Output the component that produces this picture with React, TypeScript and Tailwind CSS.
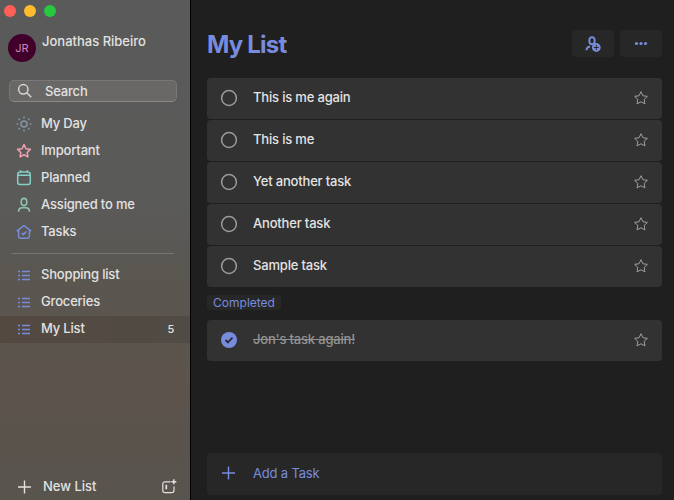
import React from 'react';

type IconProps = { className?: string };

const starPath =
  'M8 1.7l1.95 4.05 4.45.6-3.25 3.1.8 4.45L8 11.75 4.05 13.9l.8-4.45L1.6 6.35l4.45-.6z';

function Star({ className = '' }: IconProps) {
  return (
    <svg viewBox="0 0 16 16" className={`h-4 w-4 ${className}`} fill="none" stroke="currentColor" strokeLinejoin="round">
      <path d={starPath} />
    </svg>
  );
}

function Sun() {
  return (
    <svg viewBox="0 0 16 16" className="h-4 w-4 text-[#8293a5]" fill="none" stroke="currentColor" strokeWidth="1.5">
      <circle cx="8" cy="8" r="3" />
      <path
        strokeWidth="1.7"
        d="M8 .5v1.700M8 13.800v1.700M.5 8h1.700M13.800 8h1.700M2.700 2.700l1.100 1.100M12.200 12.200l1.100 1.100M2.700 13.300l1.100-1.100M12.200 3.800l1.100-1.100"
      />
    </svg>
  );
}

function Calendar() {
  return (
    <svg viewBox="0 0 16 16" className="h-4 w-4 text-[#84cfc7]" fill="none" stroke="currentColor" strokeWidth="1.5">
      <rect x="1.7" y="2" width="12.6" height="12.6" rx="2.6" />
      <path d="M1.7 5.3h12.6M4.7.3v2M11.3.3v2" />
    </svg>
  );
}

function Person() {
  return (
    <svg viewBox="0 0 16 16" className="h-4 w-4 text-[#8fc5aa]" fill="none" stroke="currentColor" strokeWidth="1.6">
      <ellipse cx="8" cy="5" rx="2.8" ry="3.6" />
      <path d="M2.6 14.8v-.8a3.6 3.6 0 0 1 3.6-3.300h3.6a3.6 3.6 0 0 1 3.6 3.300v.8" />
    </svg>
  );
}

function Home() {
  return (
    <svg viewBox="0 0 16 16" className="h-4 w-4 text-[#788cde]" fill="none" stroke="currentColor" strokeWidth="1.5" strokeLinejoin="round">
      <path d="M.8 7.200L8 1.500l7.200 5.700M2.600 6v6.600a1.700 1.700 0 0 0 1.700 1.700h7.400a1.700 1.700 0 0 0 1.700-1.700V6" />
      <path d="M5.700 9l1.600 1.600L10.400 7.500" />
    </svg>
  );
}

function List() {
  return (
    <svg viewBox="0 0 16 16" className="h-4 w-4 text-[#788cde]" fill="none" stroke="currentColor" strokeWidth="1.5">
      <path d="M2 4.500h2M6 4.500h8M2 8.500h2M6 8.500h8M2 12.500h2M6 12.500h8" />
    </svg>
  );
}

function Plus({ className = '' }: IconProps) {
  return (
    <svg viewBox="0 0 16 16" className={`h-4 w-4 ${className}`} fill="none" stroke="currentColor" strokeWidth="1.4">
      <path d="M8.500 1.500v13M2 8h13" />
    </svg>
  );
}

const smart = [
  { label: 'My Day', icon: <Sun /> },
  { label: 'Important', icon: <Star className="text-[#f0a3ae] stroke-[1.5]" /> },
  { label: 'Planned', icon: <Calendar /> },
  { label: 'Assigned to me', icon: <Person /> },
  { label: 'Tasks', icon: <Home /> },
];

const lists = [
  { label: 'Shopping list', count: '' },
  { label: 'Groceries', count: '' },
  { label: 'My List', count: '5' },
];

const tasks = ['This is me again', 'This is me', 'Yet another task', 'Another task', 'Sample task'];

function Task({ label, done = false }: { label: string; done?: boolean }) {
  return (
    <div className="flex h-[41px] shrink-0 items-center rounded-[4px] bg-[#323232] px-[13px] pb-px">
      <svg viewBox="0 0 18 18" className="h-[18px] w-[18px]" fill="none">
        {done ? (
          <>
            <circle cx="9" cy="9" r="8" fill="#788cde" />
            <path d="M5.500 9l2.400 2.300 4.600-4.600" stroke="#292c38" strokeWidth="1.900" />
          </>
        ) : (
          <circle cx="9" cy="9" r="7.400" stroke="#9b9b9b" strokeWidth="1.500" />
        )}
      </svg>
      <span className={`ml-[15px] flex-1 pb-[2px] ${done ? 'text-[#929292] line-through' : 'text-[#e3e3e3]'}`}>{label}</span>
      <Star className="text-[#a0a0a0]" />
    </div>
  );
}

export default function App() {
  return (
    <div className="flex h-[500px] w-[674px] overflow-hidden bg-[#1f1f1f] font-['Inter',sans-serif] text-[13px] font-medium leading-[18px] tracking-[-0.18px] text-[#e2e2e1]">
      <aside className="flex w-[191px] shrink-0 flex-col border-r border-black bg-[linear-gradient(180deg,#5a5a5a_0%,#5a5a59_40%,#5a564f_58%,#5c534c_78%,#58544e_100%)]">
        <div className="flex h-[22px] items-center gap-2 pl-1">
          <i className="h-3 w-3 rounded-full bg-[#ff5f57]" />
          <i className="h-3 w-3 rounded-full bg-[#febc2e]" />
          <i className="h-3 w-3 rounded-full bg-[#28c840]" />
        </div>
        <div className="mt-[12px] flex h-7 pl-2">
          <div className="flex h-7 w-7 items-center justify-center rounded-full bg-[#40002b] text-[11px] font-normal tracking-normal text-[#cf83b5]">JR</div>
          <span className="ml-[6px] mt-[-2px] tracking-[0]">Jonathas Ribeiro</span>
        </div>
        <div className="ml-[9px] mt-[18px] flex h-[22px] w-[168px] shrink-0 items-center rounded-[5px] border border-[#797876] border-b-[#8b8a88] bg-[#696866] pl-[7px]">
          <svg viewBox="0 0 16 16" className="h-4 w-4 text-[#d5d5d5]" fill="none" stroke="currentColor" strokeWidth="1.500">
            <circle cx="6.300" cy="6.300" r="4.700" />
            <path d="M9.700 9.700l4.600 4.600" />
          </svg>
          <span className="ml-3">Search</span>
        </div>
        <nav className="mt-[8px]">
          {smart.map((s) => (
            <div key={s.label} className="flex h-[27px] items-center pl-4">
              <span className="mt-px">{s.icon}</span>
              <span className="ml-[9px] pb-[2px]">{s.label}</span>
            </div>
          ))}
        </nav>
        <div className="mb-2 ml-3 mr-4 mt-2 h-px shrink-0 bg-[#777672]" />
        <nav>
          {lists.map((l) => (
            <div key={l.label} className={`flex h-[27px] items-center pb-[2px] pl-4 pr-4 ${l.count ? 'bg-[linear-gradient(90deg,#544941,#504b45)]' : ''}`}>
              <List />
              <span className="ml-[9px] flex-1 pb-px">{l.label}</span>
              <span className="text-[11px]">{l.count}</span>
            </div>
          ))}
        </nav>
        <div className="mt-auto flex h-[27px] items-center pl-4 pr-[13px]">
          <Plus />
          <span className="ml-[11px] flex-1 pb-[2px] tracking-[0]">New List</span>
          <svg viewBox="0 0 16 16" className="h-4 w-4" fill="none" stroke="currentColor" strokeWidth="1.200">
            <path d="M9.500 2.800H4a2.200 2.200 0 0 0-2.200 2.200v6.500A2.200 2.200 0 0 0 4 13.700h6.800a2.200 2.200 0 0 0 2.200-2.200V7.500" />
            <path d="M12.800.3v5M10.300 2.800h5" strokeWidth="1.400" />
            <path d="M5.300 5.800v4.500" strokeWidth="1.700" />
          </svg>
        </div>
      </aside>
      <main className="flex min-w-0 flex-1 flex-col pl-4 pr-3">
        <header className="flex h-[78px] shrink-0 items-start pt-[30px]">
          <h1 className="flex-1 text-[24px] font-bold leading-[29px] tracking-[-0.8px] text-[#788cde]">My List</h1>
          <div className="flex gap-[6px] text-[#788cde]">
            <div className="flex h-[27px] w-[42px] items-center justify-center rounded-[4px] bg-[#272727]">
              <svg viewBox="0 0 16 16" className="h-4 w-4" fill="none" stroke="currentColor" strokeWidth="1.900">
                <ellipse cx="7" cy="4.700" rx="2.700" ry="3.600" />
                <path d="M1.500 14.300v-.6c.3-1.700 1.700-3 3.500-3.200" />
                <circle cx="11.300" cy="11.500" r="4.400" fill="currentColor" stroke="none" />
                <path d="M11.300 9v5M8.800 11.500h5" stroke="#272727" strokeWidth="1" />
              </svg>
            </div>
            <div className="flex h-[27px] w-[42px] items-center justify-center rounded-[4px] bg-[#272727]">
              <svg viewBox="0 0 16 16" className="h-4 w-4" fill="currentColor">
                <circle cx="3.500" cy="7.500" r="1.600" />
                <circle cx="8" cy="7.500" r="1.600" />
                <circle cx="12.500" cy="7.500" r="1.600" />
              </svg>
            </div>
          </div>
        </header>
        <section className="flex flex-col gap-px">
          {tasks.map((t) => (
            <Task key={t} label={t} />
          ))}
        </section>
        <div className="mb-[10px] mt-2 flex h-[15px] w-[74px] items-center justify-center rounded-[3px] bg-[#272727] text-[12px] font-normal tracking-[0] text-[#788cde]">Completed</div>
        <Task label="Jon's task again!" done />
        <div className="mb-[5px] mt-auto flex h-[42px] items-center rounded-[4px] bg-[#272727] pb-[2px] pl-[13px] font-normal text-[#788cde]">
          <Plus />
          <span className="ml-[17px]">Add a Task</span>
        </div>
      </main>
    </div>
  );
}
